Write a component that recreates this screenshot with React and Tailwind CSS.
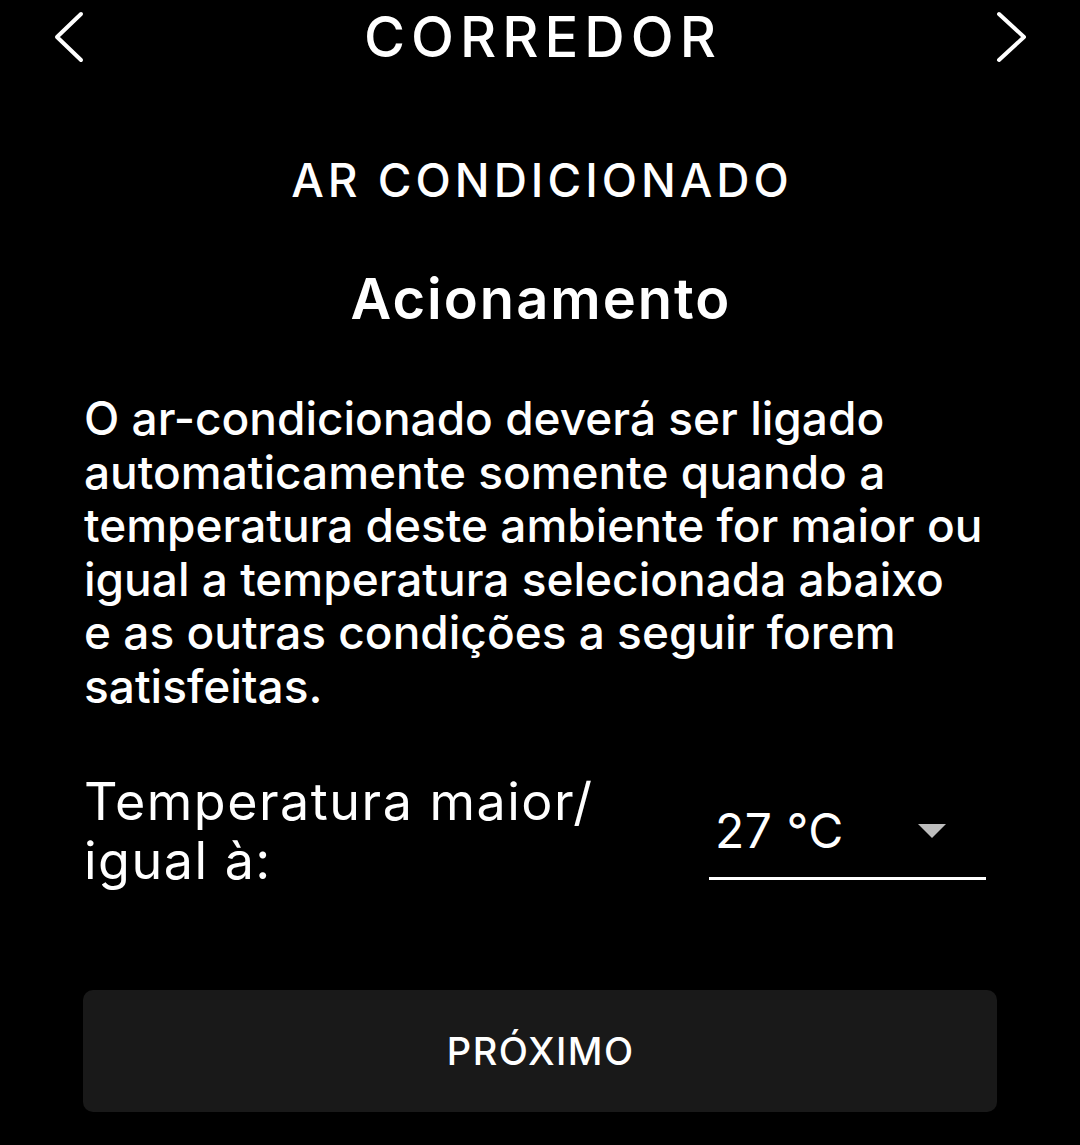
import React from "react";

export default function App() {
  const lines = [
    "O ar-condicionado deverá ser ligado",
    "automaticamente somente quando a",
    "temperatura deste ambiente for maior ou",
    "igual a temperatura selecionada abaixo",
    "e as outras condições a seguir forem",
    "satisfeitas.",
  ];
  return (
    <div className="w-[1080px] h-[1145px] bg-black text-white font-['Inter','DejaVu_Sans',sans-serif] overflow-hidden">
      <div className="h-[74px] flex items-center justify-between pl-[53px] pr-[53px]">
        <svg width="32" height="52" viewBox="0 0 32 52" fill="none">
          <polyline points="28,3 4,26 28,49" stroke="white" strokeWidth="4" strokeLinecap="round" strokeLinejoin="round" />
        </svg>
        <div className="pl-[6px] text-[56px] leading-none font-medium tracking-[6px]">CORREDOR</div>
        <svg width="32" height="52" viewBox="0 0 32 52" fill="none">
          <polyline points="4,3 29,26 4,49" stroke="white" strokeWidth="4" strokeLinecap="round" strokeLinejoin="round" />
        </svg>
      </div>
      <div className="mt-[83px] pl-[4px] text-center text-[46px] leading-none font-medium tracking-[4px]">AR CONDICIONADO</div>
      <div className="mt-[68px] pl-[2px] text-center text-[56px] leading-none font-semibold tracking-[2px]">Acionamento</div>
      <div className="px-[83px]">
        <p className="mt-[65px] pl-[1px] text-[46px] leading-[53.5px] font-medium">
          {lines.map((l, i) => (
            <span key={i} className="block whitespace-nowrap">{l}</span>
          ))}
        </p>
        <div className="mt-[59px] flex items-start">
          <div className="flex-1 pl-[1px] text-[52px] leading-[59px] font-normal tracking-[1.5px]">
            <div>Temperatura maior/</div>
            <div>igual à:</div>
          </div>
          <div className="w-[277px] mr-[11px] mt-[30px]">
            <div className="h-[58px] flex items-center justify-between pl-[6px] pr-[40px]">
              <span className="text-[48px] leading-none font-normal tracking-[0.5px]">27 °C</span>
              <svg width="28" height="14" viewBox="0 0 28 14">
                <polygon points="0,0 28,0 14,14" fill="#bdbdbd" />
              </svg>
            </div>
            <div className="mt-[17px] h-[3px] bg-white" />
          </div>
        </div>
        <button className="mt-[100px] w-full h-[122px] rounded-[10px] bg-[#191919] flex items-center justify-center pl-[1.5px] text-[38px] leading-none font-medium tracking-[1.5px]">
          PRÓXIMO
        </button>
      </div>
    </div>
  );
}
